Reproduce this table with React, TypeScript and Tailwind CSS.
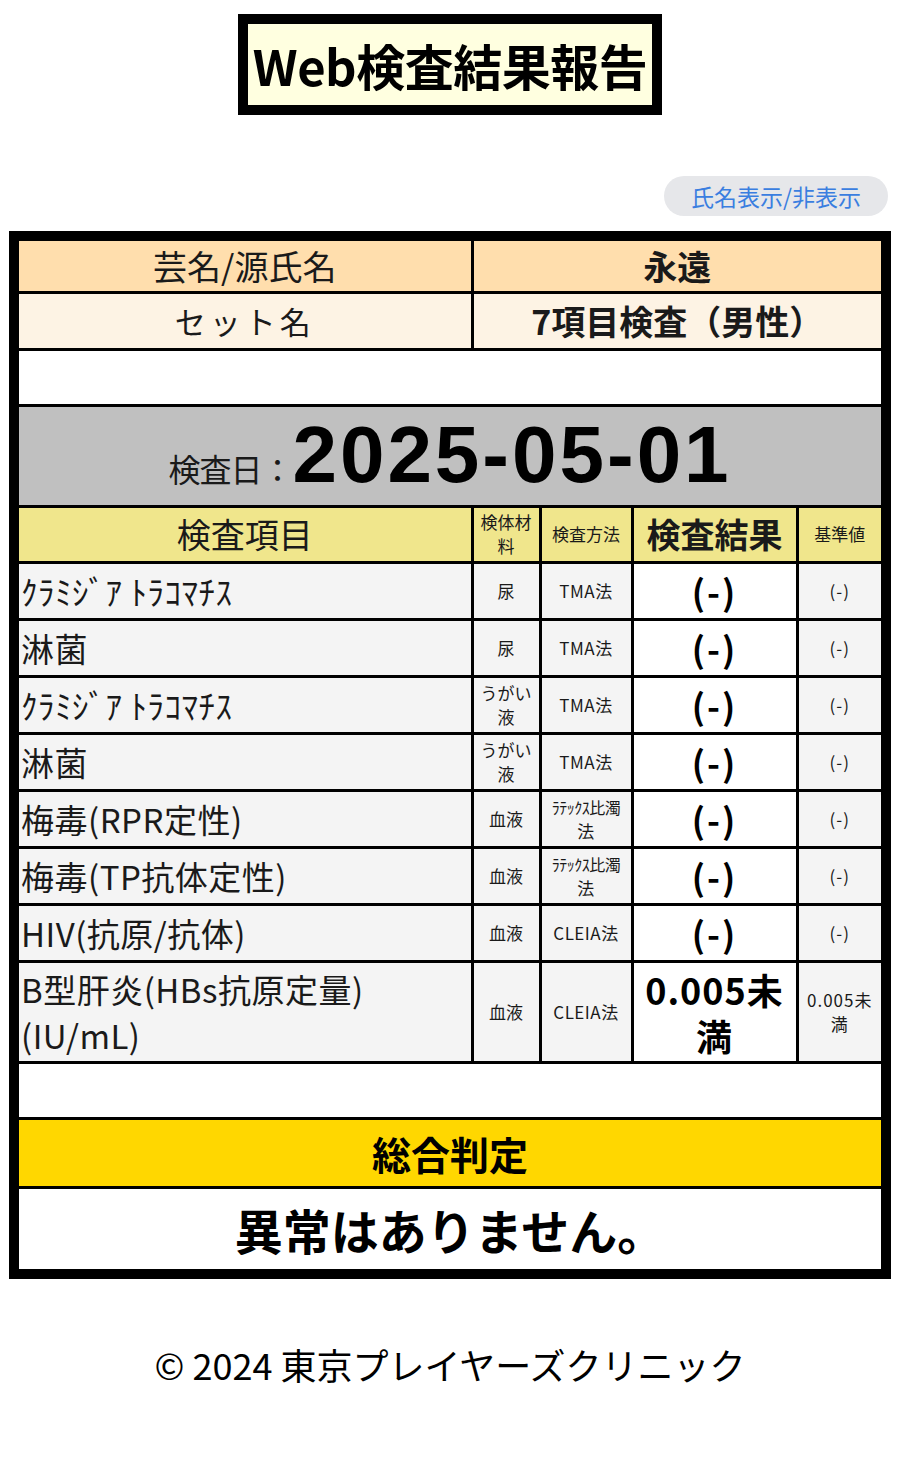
const jp = { fontFamily: '"Noto Sans CJK JP", "Noto Sans", sans-serif' };

type Row = {
  item: React.ReactNode;
  sample: React.ReactNode;
  method: React.ReactNode;
  result: React.ReactNode;
  ref: React.ReactNode;
  tall?: boolean;
};

const latex = (
  <>
    <span className="inline-block text-[16px] tracking-[-0.5px]">ﾗﾃｯｸｽ比濁</span>
    <br />
    法
  </>
);

const gargle = (
  <>
    うがい
    <br />液
  </>
);

const rows: Row[] = [
  { item: 'ｸﾗﾐｼﾞｱ ﾄﾗｺﾏﾁｽ', sample: '尿', method: 'TMA法', result: '(-)', ref: '(-)' },
  { item: '淋菌', sample: '尿', method: 'TMA法', result: '(-)', ref: '(-)' },
  { item: 'ｸﾗﾐｼﾞｱ ﾄﾗｺﾏﾁｽ', sample: gargle, method: 'TMA法', result: '(-)', ref: '(-)' },
  { item: '淋菌', sample: gargle, method: 'TMA法', result: '(-)', ref: '(-)' },
  { item: '梅毒(RPR定性)', sample: '血液', method: latex, result: '(-)', ref: '(-)' },
  { item: '梅毒(TP抗体定性)', sample: '血液', method: latex, result: '(-)', ref: '(-)' },
  { item: 'HIV(抗原/抗体)', sample: '血液', method: 'CLEIA法', result: '(-)', ref: '(-)' },
  {
    item: (
      <>
        B型肝炎(HBs抗原定量)
        <br />
        (IU/mL)
      </>
    ),
    sample: '血液',
    method: 'CLEIA法',
    result: (
      <>
        0.005未
        <br />満
      </>
    ),
    ref: (
      <>
        0.005未
        <br />満
      </>
    ),
    tall: true,
  },
];

export default function App() {
  return (
    <div className="min-h-[1459px] bg-white text-[#1a1a1a]" style={jp}>
      <div className="pt-[14px] flex justify-center">
        <div className="w-[424px] h-[101px] border-[10px] border-black bg-[#ffffe0] flex items-center justify-center">
          <h1 className="text-[49px] font-bold text-black tracking-[-0.5px]">Web検査結果報告</h1>
        </div>
      </div>

      <div className="flex justify-end pr-[12px] pt-[61px]">
        <button className="w-[224px] h-[40px] rounded-full bg-[#e6e7ea] text-[#3a7ee0] text-[23px]">
          氏名表示/非表示
        </button>
      </div>

      <div className="mx-[9px] mt-[15px] border-[10px] border-black">
        <table className="w-full table-fixed border-collapse border-hidden">
          <colgroup>
            <col className="w-[453px]" />
            <col className="w-[68px]" />
            <col className="w-[92px]" />
            <col className="w-[165px]" />
            <col />
          </colgroup>
          <tbody>
            <tr className="h-[51px] bg-[#ffdead]">
              <td className="border-[3px] border-black text-center text-[34px] leading-[44px]">芸名/源氏名</td>
              <td colSpan={4} className="border-[3px] border-black text-center text-[34px] leading-[44px] font-bold">
                永遠
              </td>
            </tr>
            <tr className="h-[57px] bg-[#fdf3e4]">
              <td className="border-[3px] border-black text-center text-[31px] leading-[44px] tracking-[4px]">
                セット名
              </td>
              <td colSpan={4} className="border-[3px] border-black text-center text-[34px] leading-[44px] font-bold">
                7項目検査（男性）
              </td>
            </tr>
            <tr className="h-[56px] bg-white">
              <td colSpan={5} className="border-[3px] border-black"></td>
            </tr>
            <tr className="h-[101px] bg-[#c0c0c0]">
              <td colSpan={5} className="border-[3px] border-black text-center align-bottom pb-[10px]">
                <span className="text-[32px] leading-none tracking-[-1px]">検査日：</span>
                <span
                  className="text-[80px] leading-[80px] font-bold text-black tracking-[3px]"
                  style={{ fontFamily: '"Liberation Sans", Arial, sans-serif' }}
                >
                  2025-05-01
                </span>
              </td>
            </tr>
            <tr className="h-[56px] bg-[#f0e68c]">
              <td className="border-[3px] border-black text-center text-[34px] leading-[44px]">検査項目</td>
              <td className="border-[3px] border-black text-center text-[17px] leading-[24px]">
                検体材
                <br />料
              </td>
              <td className="border-[3px] border-black text-center text-[17px] leading-[24px]">検査方法</td>
              <td className="border-[3px] border-black text-center text-[34px] leading-[44px] font-bold">検査結果</td>
              <td className="border-[3px] border-black text-center text-[17px] leading-[24px]">基準値</td>
            </tr>
            {rows.map((r, i) => (
              <tr key={i} className={r.tall ? 'h-[101px]' : 'h-[57px]'}>
                <td className="border-[3px] border-black bg-[#f4f4f4] text-left pl-[2px] text-[33px] leading-[46px] tracking-[0.5px]">
                  {r.item}
                </td>
                <td className="border-[3px] border-black bg-[#f4f4f4] text-center text-[17px] leading-[24px]">
                  {r.sample}
                </td>
                <td className="border-[3px] border-black bg-[#f4f4f4] text-center text-[17px] leading-[24px] tracking-[0.5px]">
                  {r.method}
                </td>
                <td
                  className={
                    r.tall
                      ? 'border-[3px] border-black bg-white text-center text-[36px] leading-[46px] font-bold text-black tracking-[1px]'
                      : 'border-[3px] border-black bg-white text-center text-[35px] leading-[46px] font-bold text-black tracking-[2px]'
                  }
                >
                  {r.result}
                </td>
                <td className="border-[3px] border-black bg-[#f4f4f4] text-center text-[17px] leading-[24px] tracking-[1px]">
                  {r.ref}
                </td>
              </tr>
            ))}
            <tr className="h-[56px] bg-white">
              <td colSpan={5} className="border-[3px] border-black"></td>
            </tr>
            <tr className="h-[69px] bg-[#ffd700]">
              <td colSpan={5} className="border-[3px] border-black text-center text-[39px] leading-[50px] font-bold text-black">
                総合判定
              </td>
            </tr>
            <tr className="h-[82px] bg-white">
              <td colSpan={5} className="border-[3px] border-black text-center text-[48px] leading-[60px] font-bold text-black">
                異常はありません。
              </td>
            </tr>
          </tbody>
        </table>
      </div>

      <footer className="pt-[58px] text-center text-[36px] text-black">© 2024 東京プレイヤーズクリニック</footer>
    </div>
  );
}
